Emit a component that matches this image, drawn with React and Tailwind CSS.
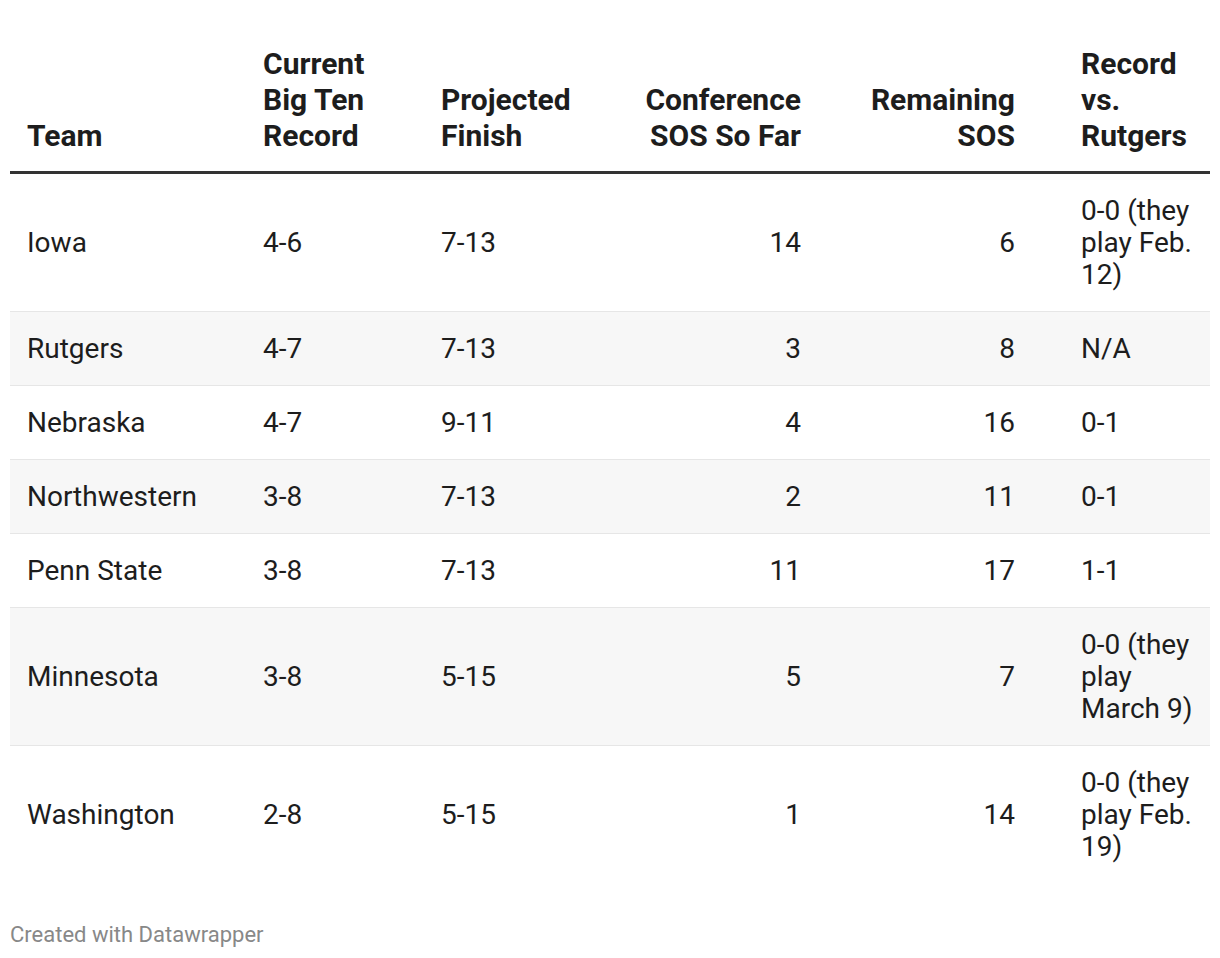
const rows = [
  { team: "Iowa", rec: "4-6", proj: "7-13", sos: "14", rem: "6", vs: "0-0 (they play Feb. 12)" },
  { team: "Rutgers", rec: "4-7", proj: "7-13", sos: "3", rem: "8", vs: "N/A" },
  { team: "Nebraska", rec: "4-7", proj: "9-11", sos: "4", rem: "16", vs: "0-1" },
  { team: "Northwestern", rec: "3-8", proj: "7-13", sos: "2", rem: "11", vs: "0-1" },
  { team: "Penn State", rec: "3-8", proj: "7-13", sos: "11", rem: "17", vs: "1-1" },
  { team: "Minnesota", rec: "3-8", proj: "5-15", sos: "5", rem: "7", vs: "0-0 (they play March 9)" },
  { team: "Washington", rec: "2-8", proj: "5-15", sos: "1", rem: "14", vs: "0-0 (they play Feb. 19)" },
];

const App = () => {
  return (
    <div
      className="min-h-screen bg-white pt-[46px] pl-[10px] text-[#1d1d1d]"
      style={{ fontFamily: "Roboto, 'Liberation Sans', sans-serif" }}
    >
      <table className="table-fixed border-collapse w-[1200px]">
        <colgroup>
          <col className="w-[236px]" />
          <col className="w-[178px]" />
          <col className="w-[196px]" />
          <col className="w-[198px]" />
          <col className="w-[214px]" />
          <col className="w-[178px]" />
        </colgroup>
        <thead>
          <tr className="border-b-[3px] border-[#333333] text-[30px] font-bold leading-[36px] align-bottom">
            <th className="text-left pl-[17px] pb-[17px]">Team</th>
            <th className="text-left pl-[17px] pr-[30px] pb-[17px]">Current Big Ten Record</th>
            <th className="text-left pl-[17px] pb-[17px]">Projected Finish</th>
            <th className="text-right pl-[17px] pr-[17px] pb-[17px]">Conference SOS So Far</th>
            <th className="text-right pl-[40px] pr-[17px] pb-[17px]">Remaining SOS</th>
            <th className="text-left pl-[49px] pr-[5px] pb-[17px]">Record vs. Rutgers</th>
          </tr>
        </thead>
        <tbody className="text-[28px] leading-[32px]">
          {rows.map((r, i) => (
            <tr
              key={r.team}
              className={
                (i % 2 === 1 ? "bg-[#f7f7f7] " : "") +
                (i > 0 ? "border-t border-[#e6e6e6]" : "")
              }
            >
              <td className="pl-[17px] pt-[21px] pb-[20px]">{r.team}</td>
              <td className="pl-[17px] pt-[21px] pb-[20px]">{r.rec}</td>
              <td className="pl-[17px] pt-[21px] pb-[20px]">{r.proj}</td>
              <td className="text-right pr-[17px] pt-[21px] pb-[20px]">{r.sos}</td>
              <td className="text-right pr-[17px] pt-[21px] pb-[20px]">{r.rem}</td>
              <td className="pl-[49px] pr-[5px] pt-[21px] pb-[20px]">{r.vs}</td>
            </tr>
          ))}
        </tbody>
      </table>
      <div className="mt-[39px] text-[22px] leading-[26px] text-[#888888]">
        Created with Datawrapper
      </div>
    </div>
  );
};

export default App;
